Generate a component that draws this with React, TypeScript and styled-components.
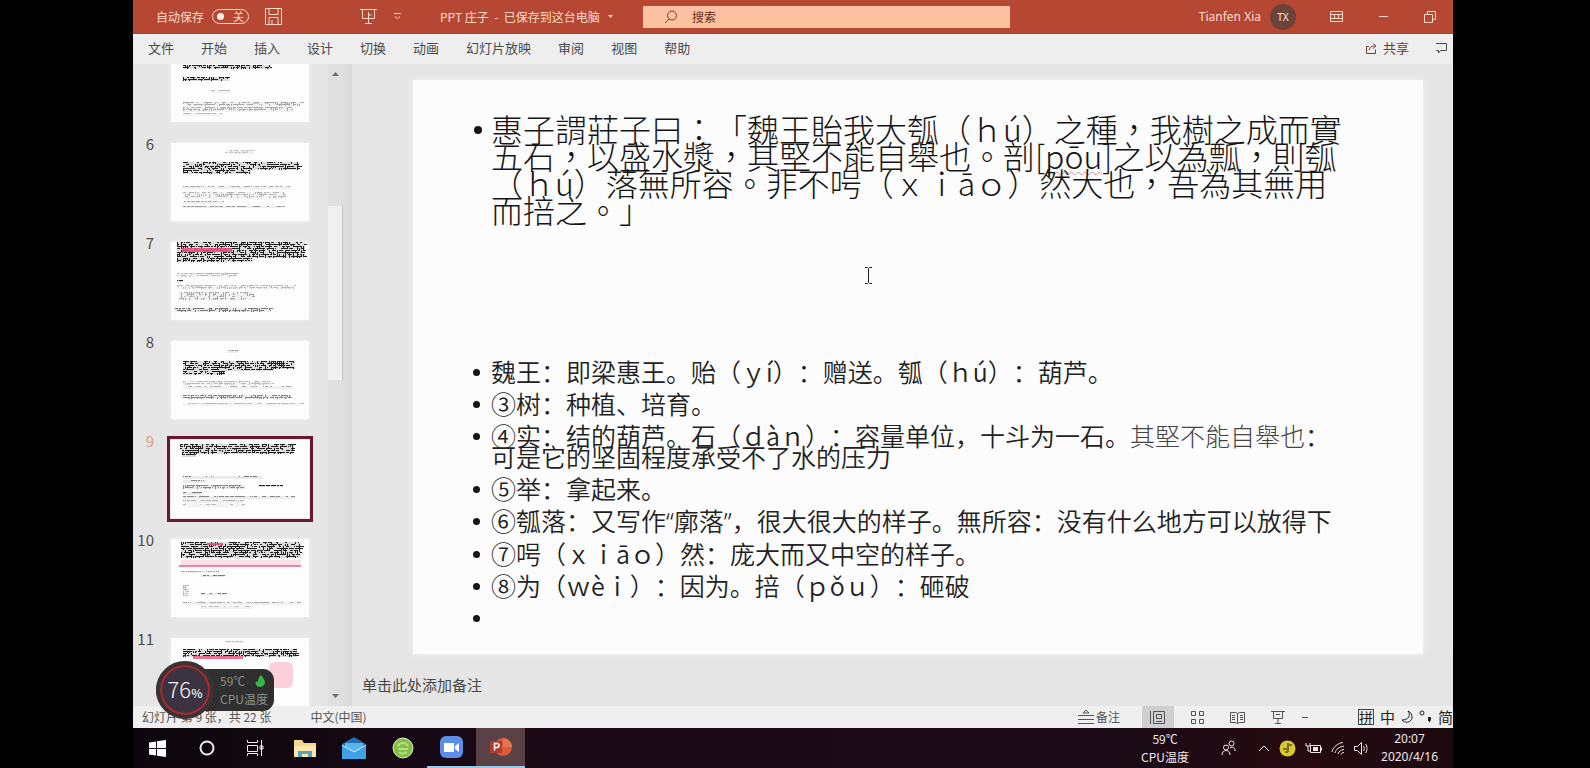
import React from 'react';
import styled, { createGlobalStyle } from 'styled-components';

const SC = '"Noto Sans CJK SC", "Noto Sans", sans-serif';
const TC = '"Noto Sans CJK TC", "Noto Sans", sans-serif';

const GlobalStyle = createGlobalStyle`
  * { box-sizing: border-box; }
  body { margin: 0; background: #000; font-family: ${SC}; text-spacing-trim: space-all; }
  button { margin: 0; padding: 0; border: 0; background: none; font: inherit; color: inherit; white-space: nowrap; }
  svg { display: block; flex: none; }
  ul, ol { margin: 0; padding: 0; list-style: none; }
`;

const Screen = styled.div`
  height: 100vh;
  padding: 0 137px 0 133px;
  display: flex;
  flex-direction: column;
  overflow: hidden;
`;

/* ---------- title bar ---------- */
const TitleBar = styled.header`
  flex: none;
  height: 34px;
  display: flex;
  align-items: center;
  background: #b54733;
  border-bottom: 1px solid #8e4a48;
  color: #ffdccb;
  font-size: 12px;
  line-height: 16px;
`;
const TitleLeft = styled.div`
  width: 510px;
  height: 33px;
  padding-left: 23px;
  display: flex;
  align-items: center;
`;
const AutoSave = styled.label`
  display: flex;
  align-items: center;
  gap: 8px;
  margin-right: 16px;
  white-space: nowrap;
`;
const Switch = styled.span`
  position: relative;
  width: 37px;
  height: 15px;
  border: 1px solid #ffdccb;
  border-radius: 8px;
  font-size: 11px;
  line-height: 13px;
  text-align: right;
  padding-right: 4px;
  &::before {
    content: '';
    position: absolute;
    left: 4px;
    top: 3px;
    width: 7px;
    height: 7px;
    border-radius: 50%;
    background: #fff1e8;
  }
`;
const HiddenCheck = styled.input`
  position: absolute;
  inset: 0;
  margin: 0;
  opacity: 0;
`;
const QuickButtons = styled.div`
  display: flex;
  align-items: center;
  gap: 16px;
  margin-left: 78px;
  margin-right: 38px;
`;
const DocTitle = styled.span`
  display: flex;
  align-items: center;
  gap: 8px;
  white-space: pre;
`;
const SearchBox = styled.label`
  flex: 0 1 367px;
  height: 22px;
  margin-top: 1px;
  padding-left: 21px;
  display: flex;
  align-items: center;
  gap: 14px;
  background: linear-gradient(#ffbfa8, #f9c49a);
  color: #7c3a24;
`;
const SearchInput = styled.input`
  flex: 1;
  min-width: 0;
  border: 0;
  padding: 0;
  background: none;
  font: 12px/16px ${SC};
  outline: 0;
  &::placeholder { color: #6b2c1a; opacity: 1; }
`;
const TitleRight = styled.div`
  flex: 1;
  display: flex;
  align-items: center;
  justify-content: flex-end;
  padding-right: 17px;
  font-family: "Noto Sans", sans-serif;
`;
const Avatar = styled.span`
  width: 26px;
  height: 26px;
  margin: 0 34px 0 9px;
  border-radius: 50%;
  background: #6b4339;
  color: #ffe9df;
  font-size: 10px;
  line-height: 26px;
  text-align: center;
`;
const WindowButtons = styled.div`
  display: flex;
  align-items: center;
  gap: 36px;
`;

/* ---------- ribbon tabs ---------- */
const Ribbon = styled.nav`
  flex: none;
  height: 30px;
  padding: 0 5px 2px 15px;
  display: flex;
  align-items: center;
  gap: 27px;
  background: #efeeef;
  color: #4a4a4a;
  font-size: 13px;
  line-height: 18px;
`;
const Share = styled.button`
  margin-left: auto;
  display: flex;
  align-items: center;
  gap: 6px;
  color: #7a3a35;
`;

/* ---------- work area ---------- */
const Work = styled.main`
  flex: 1;
  min-height: 0;
  display: flex;
  background: #e5e5e5;
`;
const ThumbPane = styled.aside`
  width: 195px;
  flex: none;
  overflow: hidden;
`;
const ThumbList = styled.ol`
  margin-top: -20px;
`;
const ThumbRow = styled.li`
  height: 99px;
  display: flex;
  align-items: flex-start;
`;
const ThumbNumber = styled.span<{ $active?: boolean }>`
  width: 38px;
  flex: none;
  padding-right: 17px;
  text-align: right;
  font-size: 15px;
  line-height: 18px;
  margin-top: -8px;
  color: ${p => (p.$active ? '#d9a184' : '#4c4c4c')};
`;
const Thumb = styled.button<{ $active?: boolean }>`
  width: 138px;
  height: 78px;
  background: #fdfdfd;
  box-shadow: 0 0 4px #f4f4f4;
  outline: ${p => (p.$active ? '3px solid #6a1734' : 'none')};
  outline-offset: 1px;
`;
const ScrollColumn = styled.div`
  width: 24px;
  flex: none;
  padding: 6px 9px 6px 0;
  display: flex;
  flex-direction: column;
  align-items: center;
  background: linear-gradient(90deg, #dfdfdf 60%, #d8d8d8);
`;
const ScrollTrack = styled.div`
  flex: 1;
  width: 15px;
  padding-top: 128px;
`;
const ScrollHandle = styled.div`
  height: 174px;
  background: #f0f0f0;
  border-right: 1px solid #c4c4c4;
`;
const Editor = styled.section`
  flex: 1;
  min-width: 0;
  display: flex;
  flex-direction: column;
`;
const Stage = styled.div`
  flex: 1;
  min-height: 0;
  padding: 16px 29px 0 61px;
  border-right: 1px solid #efefef;
  display: flex;
  flex-direction: column;
`;
const Slide = styled.article`
  position: relative;
  height: 574px;
  padding: 35px 60px 0 60px;
  background: #fcfcfc;
  box-shadow: 0 0 8px #f3f3f3;
  color: #151515;
`;
const Passage = styled.ul`
  height: 246px;
  font-family: ${TC};
  font-weight: 300;
  font-size: 32px;
  line-height: 27px;
`;
const Bullet = styled.li`
  position: relative;
  padding-left: 18px;
  white-space: nowrap;
  &::before {
    content: '';
    position: absolute;
    left: 1px;
    top: 11px;
    width: 8px;
    height: 8px;
    border-radius: 50%;
    background: #151515;
  }
`;
const Line = styled.span`
  display: block;
`;
const Pinyin = styled.span`
  text-decoration: underline wavy #dd8c95 1px;
  text-underline-offset: 2px;
`;
const Notes = styled.ul`
  font-family: ${SC};
  font-weight: 350;
  font-size: 25px;
  line-height: 21px;
  color: #222;
`;
const Note = styled(Bullet)`
  min-height: 21px;
  margin-bottom: 11px;
  &::before {
    left: 0;
    top: 8px;
    width: 7px;
    height: 7px;
  }
`;
const Quoted = styled.span`
  font-family: "Noto Sans", sans-serif;
`;
const Old = styled.span`
  font-family: ${TC};
  font-weight: 300;
  color: #444;
`;
const TextCursor = styled.svg`
  position: absolute;
  left: 451px;
  top: 187px;
`;
const SpeakerNotes = styled.div`
  flex: none;
  height: 52px;
  padding: 21px 0 0 10px;
  color: #484848;
  font-size: 15px;
  line-height: 20px;
`;

/* ---------- status bar ---------- */
const StatusBar = styled.footer`
  flex: none;
  position: relative;
  height: 22px;
  padding-left: 9px;
  display: flex;
  align-items: center;
  background: #efefef;
  color: #555;
  font-size: 12px;
  line-height: 18px;
  white-space: nowrap;
`;
const Language = styled.span`
  margin-left: 39px;
`;
const ViewTools = styled.div`
  height: 22px;
  margin-left: auto;
  display: flex;
  align-items: center;
  gap: 8px;
`;
const NotesButton = styled.button`
  display: flex;
  align-items: center;
  gap: 2px;
  margin-right: 14px;
  font-size: 12px;
`;
const ViewButton = styled.button<{ $active?: boolean }>`
  width: 32px;
  height: 22px;
  display: flex;
  align-items: center;
  justify-content: center;
  background: ${p => (p.$active ? '#cfcfcf' : 'none')};
`;
const Ime = styled.div`
  display: flex;
  align-items: center;
  gap: 6px;
  margin-left: 42px;
  color: #222;
  font-size: 15px;
`;
const ImeBox = styled.span`
  width: 16px;
  height: 16px;
  border: 1px solid #444;
  font-size: 14px;
  line-height: 14px;
  text-align: center;
`;

/* ---------- CPU monitor floating over the window ---------- */
const Monitor = styled.aside`
  position: absolute;
  left: 23px;
  bottom: 17px;
  width: 118px;
  height: 42px;
  padding: 3px 8px 3px 64px;
  border-radius: 21px 11px 11px 21px;
  background: #2f2f2f;
  color: #8d8d8d;
  font-size: 12px;
  line-height: 18px;
`;
const MonitorRow = styled.div`
  display: flex;
  align-items: center;
  gap: 10px;
`;
const Gauge = styled.div`
  position: absolute;
  left: 0;
  top: -8px;
  width: 58px;
  height: 58px;
  border: 4px solid #3a3333;
  border-radius: 50%;
  background: #3b3340;
  box-shadow: inset 0 0 0 2px #b3272f;
  color: #f5f5f5;
  font: 300 22px/46px "Noto Sans CJK SC", sans-serif;
  text-align: center;
`;
const Percent = styled.small`
  font-size: 12px;
  font-weight: 500;
`;

/* ---------- Windows taskbar ---------- */
const TaskBar = styled.footer`
  flex: none;
  height: 40px;
  display: flex;
  align-items: center;
  background: linear-gradient(90deg, #0c060c, #1b0a16 30%, #1a0b16 75%, #260a10 88%, #1c0910);
  color: #f1e9e9;
  font-size: 12px;
  line-height: 18px;
`;
const AppButton = styled.button<{ $state?: 'open' | 'front' }>`
  width: 49px;
  height: 40px;
  display: flex;
  align-items: center;
  justify-content: center;
  background: ${p => (p.$state === 'front' ? '#5a4145' : 'none')};
  border-bottom: ${p => (p.$state ? '2px solid #9cc6e6' : '0')};
`;
const Tray = styled.div`
  margin-left: auto;
  padding-right: 15px;
  display: flex;
  align-items: center;
`;
const TrayText = styled.div`
  text-align: center;
  white-space: nowrap;
`;
const People = styled.button`
  margin: 0 22px 0 32px;
`;
const TrayIcons = styled.div`
  display: flex;
  align-items: center;
  gap: 9px;
  margin-right: 12px;
`;
const Clock = styled(TrayText)`
  font-family: "Noto Sans", sans-serif;
`;

/* ---------- slide thumbnails ---------- */
type Band = { y: number; x?: number; w: number; h?: number; tone?: string; dense?: number; seed?: number; solid?: boolean };

const INK = '#222';

function strokes(b: Band, k: number) {
  let s = (b.seed ?? 7) * 7919 + k * 104729;
  const rnd = () => (s = (s * 1103515245 + 12345) % 2147483648) / 2147483648;
  const x0 = b.x ?? 12;
  let d = '';
  const rows = Math.max(1, Math.floor((b.h ?? 1) / 2));
  for (let r = 0; r < rows; r++) {
    let x = x0;
    while (x < x0 + b.w) {
      const l = 1 + Math.floor(rnd() * 4);
      if (rnd() < (b.dense ?? 0.7)) d += `M${x} ${b.y + r * 2 + 0.5}h${l}`;
      x += l + (rnd() < 0.5 ? 1 : 0);
    }
    x = x0;
    while (rows > 1 && x < x0 + b.w) {
      if (rnd() < 0.3) d += `M${x + 0.5} ${b.y + r * 2}v2`;
      x += 2;
    }
  }
  return d;
}

const thumbs: { n: number; cut?: boolean; bands: Band[]; active?: boolean }[] = [
  { n: 5, cut: true, bands: [{ y: 21, w: 88, h: 4, tone: INK }, { y: 33, w: 46, h: 4, tone: INK }, { y: 46, x: 40, w: 20, h: 3, tone: '#bbb' }, { y: 58, w: 118, h: 4, tone: '#aaa' }, { y: 63, w: 110, h: 5, tone: '#aaa' }, { y: 69, w: 40, h: 3, tone: '#bbb' }] },
  { n: 6, bands: [{ y: 7, x: 54, w: 28, h: 4, tone: '#ccc' }, { y: 19, w: 116, h: 8, tone: INK }, { y: 27, w: 68, h: 4, tone: INK }, { y: 43, w: 108, h: 3, tone: '#aaa' }, { y: 49, w: 102, h: 7, tone: '#b4b4b4', dense: 0.4 }, { y: 58, w: 40, h: 3, tone: '#aaa' }, { y: 63, w: 100, h: 2, tone: '#999' }] },
  { n: 7, bands: [{ y: 0, x: 6, w: 128, h: 16, tone: INK }, { y: 16, x: 6, w: 76, h: 4, tone: INK }, { y: 6, x: 11, w: 50, h: 4, tone: '#e8507c', solid: true }, { y: 31, x: 6, w: 60, h: 4, tone: '#bbb' }, { y: 38, x: 6, w: 6, h: 2, tone: INK }, { y: 43, x: 6, w: 118, h: 4, tone: '#bbb', dense: 0.5 }, { y: 50, x: 8, w: 76, h: 8, tone: '#aaa', dense: 0.4 }, { y: 66, x: 4, w: 96, h: 4, tone: '#777' }] },
  { n: 8, bands: [{ y: 9, x: 56, w: 12, h: 3, tone: '#999' }, { y: 20, w: 112, h: 8, tone: INK }, { y: 28, w: 90, h: 2, tone: INK }, { y: 30, w: 42, h: 4, tone: INK }, { y: 40, w: 90, h: 4, tone: '#bbb' }, { y: 45, w: 110, h: 3, tone: '#aaa', dense: 0.5 }, { y: 54, w: 108, h: 4, tone: '#888' }, { y: 62, w: 118, h: 3, tone: '#bbb' }] },
  { n: 9, active: true, bands: [{ y: 4, x: 9, w: 114, h: 6, tone: INK }, { y: 10, x: 11, w: 110, h: 4, tone: INK }, { y: 14, x: 11, w: 14, h: 3, tone: INK }, { y: 36, w: 80, h: 3, tone: '#777', dense: 0.4 }, { y: 40, w: 24, h: 3, tone: '#888' }, { y: 45, w: 62, h: 4, tone: '#888' }, { y: 45, x: 88, w: 24, h: 2, tone: INK, dense: 1 }, { y: 52, w: 18, h: 3, tone: '#777' }, { y: 56, w: 112, h: 3, tone: '#888' }, { y: 60, w: 60, h: 3, tone: '#aaa' }, { y: 64, w: 62, h: 3, tone: '#bbb', dense: 0.4 }] },
  { n: 10, bands: [{ y: 3, x: 10, w: 120, h: 16, tone: INK }, { y: 4, x: 36, w: 16, h: 2, tone: '#e8507c', solid: true }, { y: 21, x: 10, w: 120, h: 7, tone: '#fbdbe2', solid: true }, { y: 26, x: 8, w: 122, h: 2, tone: '#ea7f9a', solid: true }, { y: 32, x: 10, w: 38, h: 2, tone: '#aaa' }, { y: 36, x: 30, w: 24, h: 2, tone: '#777' }, { y: 54, x: 30, w: 24, h: 2, tone: '#777' }, { y: 46, w: 4, h: 12, tone: '#bbb' }, { y: 63, w: 118, h: 3, tone: '#a8a8a8' }, { y: 67, x: 30, w: 50, h: 3, tone: '#bbb' }] },
  { n: 11, bands: [{ y: 3, x: 54, w: 18, h: 2, tone: '#bbb' }, { y: 11, w: 114, h: 8, tone: INK }, { y: 18, x: 22, w: 50, h: 3, tone: '#ec6387', solid: true }] },
];

const ThumbArt = ({ bands, seed }: { bands: Band[]; seed: number }) => (
  <svg width="138" height="78" viewBox="0 0 138 78" shapeRendering="crispEdges" aria-hidden="true">
    {seed === 11 && <rect x="98" y="24" width="24" height="26" rx="6" fill="#fbd0da" />}
    {bands.map((b, i) => (
      <g key={i}>
        <rect x={b.x ?? 12} y={b.y} width={b.w} height={b.h ?? 1} fill={b.tone} opacity={b.solid ? 0.9 : 0.15} />
        {!b.solid && <path d={strokes({ ...b, seed }, i)} stroke={b.tone} strokeWidth="1" fill="none" />}
      </g>
    ))}
  </svg>
);

/* ---------- icons ---------- */
const Icon = ({ w = 16, h = 16, children }: { w?: number; h?: number; children: React.ReactNode }) => (
  <svg width={w} height={h} viewBox={`0 0 ${w} ${h}`} fill="none" stroke="currentColor" aria-hidden="true">
    {children}
  </svg>
);

const tabs = ['文件', '开始', '插入', '设计', '切换', '动画', '幻灯片放映', '审阅', '视图', '帮助'];

export default function App() {
  return (
    <Screen>
      <GlobalStyle />
      <TitleBar>
        <TitleLeft>
          <AutoSave>
            自动保存
            <Switch>
              <HiddenCheck type="checkbox" />关
            </Switch>
          </AutoSave>
          <button aria-label="保存">
            <Icon w={17} h={17}><path d="M.5 .5h16v16H.5zM4 .5v6h9v-6M4 16.500v-7h9v7M7 16v-4" /></Icon>
          </button>
          <QuickButtons>
            <button aria-label="从头开始">
              <Icon w={17} h={17}><path d="M0 1.500h17M2.500 1.500v9h12v-9M8.500 4v11M5 15.500h7M8.500 7h3" /></Icon>
            </button>
            <button aria-label="自定义快速访问工具栏">
              <Icon w={9} h={9}><path d="M1 1.500h7M2 4.500l2.500 2 2.500-2" /></Icon>
            </button>
          </QuickButtons>
          <DocTitle>
            {'PPT 庄子  -  已保存到这台电脑'}
            <Icon w={5} h={4}><path d="M0 0h5l-2.500 3z" fill="currentColor" stroke="none" /></Icon>
          </DocTitle>
        </TitleLeft>
        <SearchBox>
          <Icon w={14} h={14}><circle cx="8" cy="5.500" r="4.500" /><path d="M5 9l-4 4" /></Icon>
          <SearchInput placeholder="搜索" aria-label="搜索" />
        </SearchBox>
        <TitleRight>
          Tianfen Xia
          <Avatar>TX</Avatar>
          <WindowButtons>
            <button aria-label="功能区显示选项">
              <Icon w={13} h={11}><path d="M.5 .5h12v10H.5zM.5 3.500h12M4.500 3.500v4M8.500 3.500v4M.5 7.500h12" /></Icon>
            </button>
            <button aria-label="最小化">
              <Icon w={9} h={9}><path d="M0 4.500h9" /></Icon>
            </button>
            <button aria-label="还原">
              <Icon w={12} h={12}><path d="M.5 3.500h8v8h-8zM3.500 3v-2.500h8v8h-3" /></Icon>
            </button>
          </WindowButtons>
        </TitleRight>
      </TitleBar>

      <Ribbon>
        {tabs.map(t => <button key={t}>{t}</button>)}
        <Share>
          <Icon w={11} h={12}><path d="M3 4.500H.5v7h9v-4M3.500 8c0-3 2-4 5-4M7 1.500l3 2.500-3 2.500" /></Icon>
          共享
        </Share>
        <button aria-label="批注">
          <Icon w={12} h={12}><path d="M0 1.500h10.500v7h-6l-2 2.500v-2.500H0" /></Icon>
        </button>
      </Ribbon>

      <Work>
        <ThumbPane>
          <ThumbList>
            {thumbs.map(t => (
              <ThumbRow key={t.n}>
                <ThumbNumber $active={t.active}>{t.cut ? null : t.n}</ThumbNumber>
                <Thumb $active={t.active} aria-label={`幻灯片 ${t.n}`}>
                  <ThumbArt bands={t.bands} seed={t.n} />
                </Thumb>
              </ThumbRow>
            ))}
          </ThumbList>
        </ThumbPane>
        <ScrollColumn>
          <Icon w={13} h={8}><path d="M3 6l3.500-4 3.500 4z" fill="#6c6c6c" stroke="none" /></Icon>
          <ScrollTrack><ScrollHandle /></ScrollTrack>
          <Icon w={13} h={8}><path d="M3 2l3.500 4 3.500-4z" fill="#6c6c6c" stroke="none" /></Icon>
        </ScrollColumn>
        <Editor>
          <Stage>
            <Slide>
              <Passage>
                <Bullet>
                  <Line>惠子謂莊子曰：「魏王貽我大瓠（ｈú）之種，我樹之成而實</Line>
                  <Line>五石，以盛水漿，其堅不能自舉也。剖[<Pinyin>pōu</Pinyin>]之以為瓢，則瓠</Line>
                  <Line>（ｈú）落無所容。非不呺（ｘｉāｏ）然大也，吾為其無用</Line>
                  <Line>而掊之。」</Line>
                </Bullet>
              </Passage>
              <Notes>
                <Note>魏王：即梁惠王。贻（ｙí）：赠送。瓠（ｈú）：葫芦。</Note>
                <Note>③树：种植、培育。</Note>
                <Note>
                  <Line>④实：结的葫芦。石（ｄàｎ）：容量单位，十斗为一石。<Old>其堅不能自舉也</Old>：</Line>
                  <Line>可是它的坚固程度承受不了水的压力</Line>
                </Note>
                <Note>⑤举：拿起来。</Note>
                <Note>⑥瓠落：又写作<Quoted>“</Quoted>廓落<Quoted>”</Quoted>，很大很大的样子。無所容：没有什么地方可以放得下</Note>
                <Note>⑦呺（ｘｉāｏ）然：庞大而又中空的样子。</Note>
                <Note>⑧为（ｗèｉ）：因为。掊（ｐǒｕ）：砸破</Note>
                <Note />
              </Notes>
              <TextCursor width="9" height="17" viewBox="0 0 9 17" fill="none" stroke="#222" aria-hidden="true">
                <path d="M1 .5h2.500l1 1 1-1H8M4.500 1.500v14M1 16.500h2.500l1-1 1 1H8" />
              </TextCursor>
            </Slide>
          </Stage>
          <SpeakerNotes>单击此处添加备注</SpeakerNotes>
        </Editor>
      </Work>

      <StatusBar>
        <span>幻灯片 第 9 张，共 22 张</span>
        <Language>中文(中国)</Language>
        <ViewTools>
          <NotesButton>
            <Icon w={16} h={14}><path d="M0 5.500h16M0 9.500h16M0 13.500h16M5 3l3-3 3 3z" /></Icon>
            备注
          </NotesButton>
          <ViewButton $active aria-label="普通视图">
            <Icon w={15} h={13}><path d="M.5 0v13M3.500 .5h11v12h-11zM6.500 3.500h5v4h-5zM6 10.500h6" /></Icon>
          </ViewButton>
          <ViewButton aria-label="幻灯片浏览">
            <Icon w={14} h={13}><path d="M.5 .5h4v4h-4zM8.500 .5h4v4h-4zM.5 8.500h4v4h-4zM8.500 8.500h4v4h-4z" /></Icon>
          </ViewButton>
          <ViewButton aria-label="阅读视图">
            <Icon w={15} h={13}><path d="M.5 1.500h5l2 1 2-1h5v10h-5l-2 1-2-1h-5zM7.500 2v10M2 4.500h3M2 6.500h3M2 8.500h3M10 4.500h3M10 6.500h3M10 8.500h3" /></Icon>
          </ViewButton>
          <ViewButton aria-label="幻灯片放映">
            <Icon w={14} h={13}><path d="M0 .5h14M2.500 .5v7h9v-7M5 3.500h4M7 7.500v5M4 12.500h6" /></Icon>
          </ViewButton>
          <button aria-label="缩小"><Icon w={6} h={5}><path d="M0 2.500h6" /></Icon></button>
          <Ime>
            <ImeBox>拼</ImeBox>
            <span>中</span>
            <Icon w={12} h={14}><path d="M7 1c3 4 1 9-6 9 3 3.500 9 3 10-2 .3-3-1-6-4-7z" /></Icon>
            <Icon w={13} h={14}><circle cx="3" cy="3" r="2" /><path d="M9 7h3v3l-2 3v-2H9z" fill="currentColor" stroke="none" /></Icon>
            <span>简</span>
          </Ime>
        </ViewTools>
        <Monitor>
          <MonitorRow>
            59℃
            <Icon w={10} h={12}><path d="M6 0c2 3 4 5 4 8-1 3-3 4-6 4-3-1-4-3-3-6l2 1c0-3 1-5 3-7z" fill="#39b54a" stroke="none" /></Icon>
          </MonitorRow>
          <MonitorRow>CPU温度</MonitorRow>
          <Gauge>76<Percent>%</Percent></Gauge>
        </Monitor>
      </StatusBar>

      <TaskBar>
        <AppButton aria-label="开始">
          <Icon w={17} h={17}><path d="M0 2.500l7-1v6.500H0zM8 1.300L17 0v8H8zM0 9h7v6.500l-7-1zM8 9h9v8l-9-1.300z" fill="#fff" stroke="none" /></Icon>
        </AppButton>
        <AppButton aria-label="Cortana">
          <Icon w={16} h={16}><circle cx="8" cy="8" r="6.500" strokeWidth="2" /></Icon>
        </AppButton>
        <AppButton aria-label="任务视图">
          <Icon w={17} h={16}><path d="M.5 0v2.500h10V0M.5 5.500h10v6H.5zM.5 16v-2.500h10V16M14.500 0v16M13 6h3v3h-3z" /></Icon>
        </AppButton>
        <AppButton aria-label="文件资源管理器">
          <Icon w={22} h={19}><path d="M0 1h8l2 3h12v14H0z" fill="#f3d98b" stroke="none" /><path d="M0 7h22v11H0z" fill="#f8e8ae" stroke="none" /><path d="M4 18v-6h14v6h-4v-3H8v3z" fill="#5fa3b8" stroke="none" /></Icon>
        </AppButton>
        <AppButton aria-label="邮件">
          <Icon w={24} h={22}><path d="M0 7L12 0l12 7v15H0z" fill="#1f6fb6" stroke="none" /><path d="M3 6h18v9H3z" fill="#58b7ea" stroke="none" /><path d="M0 8l12 7 12-7v14H0z" fill="#3ea2e6" stroke="none" /><path d="M0 8l12 7 12-7" stroke="#d8effc" /></Icon>
        </AppButton>
        <AppButton aria-label="浏览器">
          <Icon w={22} h={22}><circle cx="11" cy="11" r="10" fill="#86bf45" stroke="#dcebc2" /><path d="M6 9c2-4 8-4 10 0M6 12h10M7 15c2 2 6 2 8 0" stroke="#b9dc86" strokeWidth="2" /></Icon>
        </AppButton>
        <AppButton $state="open" aria-label="会议">
          <Icon w={23} h={22}><rect width="23" height="22" rx="6" fill="#5c8de8" stroke="none" /><path d="M4 7h10v9H4zM15 10l4-3v9l-4-3z" fill="#fff" stroke="none" /></Icon>
        </AppButton>
        <AppButton $state="front" aria-label="PowerPoint">
          <Icon w={22} h={20}><circle cx="13" cy="10" r="9" fill="#dc5a35" stroke="none" /><path d="M13 1a9 9 0 0 1 9 9h-9z" fill="#e8744f" stroke="none" /><rect y="4" width="12" height="12" fill="#a8402c" stroke="none" /><path d="M4.500 13.500v-7h2.500a2 2 0 0 1 0 4h-2.500" stroke="#fff" strokeWidth="1.500" /></Icon>
        </AppButton>
        <Tray>
          <TrayText>59℃<br />CPU温度</TrayText>
          <People aria-label="人脉">
            <Icon w={15} h={16}><circle cx="10.500" cy="3.500" r="2.500" /><circle cx="5" cy="7.500" r="2.500" /><path d="M1 15c0-6 8-6 8 0M9 8c3-2 5 0 5 3" /></Icon>
          </People>
          <TrayIcons>
            <Icon w={12} h={8}><path d="M1 7l5-5 5 5" /></Icon>
            <Icon w={17} h={17}><circle cx="8.500" cy="8.500" r="8" fill="#d8c832" stroke="none" /><path d="M9 3v9M4 9h6M9 5l4 0M6 12h3" stroke="#7d6e14" strokeWidth="2" /></Icon>
            <Icon w={17} h={12}><path d="M5.500 3.500h10v7h-10zM16.500 5.500v3M1 1v3h4V1M3 4v5h2" /><path d="M8 5h5v4H8z" fill="currentColor" stroke="none" /></Icon>
            <Icon w={14} h={14}><path d="M1 11C2 6 7 2 12 1.500M4 12c1-4 4-6 9-7M7 13c1-3 3-4 6-4.500M10 13.500c.5-1.500 1.500-2 3-2" /></Icon>
            <Icon w={15} h={13}><path d="M.5 4.500h3l4-4v12l-4-4h-3zM9.500 4c1 1.500 1 3.500 0 5M11.500 2c2 2.500 2 6.500 0 9" /></Icon>
          </TrayIcons>
          <Clock>20:07<br />2020/4/16</Clock>
        </Tray>
      </TaskBar>
    </Screen>
  );
}
